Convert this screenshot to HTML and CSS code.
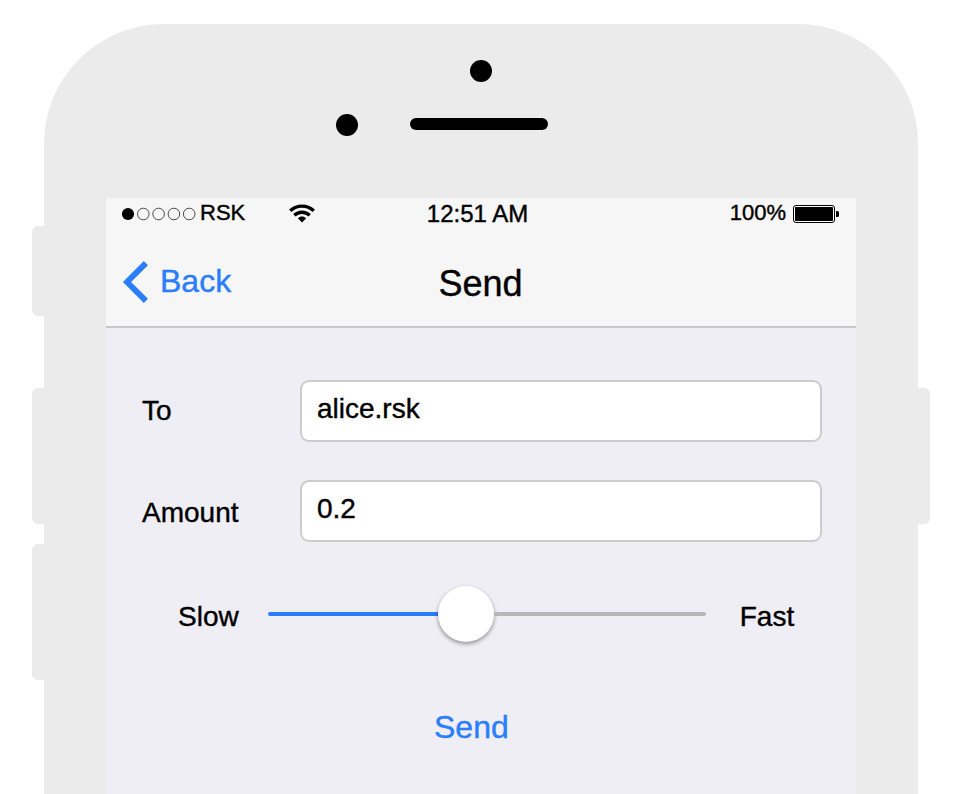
FILE: index.html
```html
<!DOCTYPE html>
<html lang="en">
<head>
<meta charset="utf-8">
<title>Send</title>
<link rel="stylesheet" href="styles.css">
</head>
<body>
<div class="phone">
  <span class="side-button mute"></span>
  <span class="side-button volume-up"></span>
  <span class="side-button volume-down"></span>
  <span class="side-button power"></span>
  <div class="bezel">
    <span class="dot camera"></span>
    <div class="earpiece">
      <span class="dot"></span>
      <span class="speaker"></span>
    </div>
  </div>
  <main class="screen">
    <header>
      <div class="status-bar">
        <div class="carrier">
          <svg class="signal" width="76" height="14" viewBox="0 0 76 14">
            <circle cx="7" cy="7" r="6.1"/>
            <g fill="none" stroke="#222" stroke-width=".8">
              <circle cx="22.3" cy="7" r="5.8"/>
              <circle cx="37.6" cy="7" r="5.8"/>
              <circle cx="52.9" cy="7" r="5.8"/>
              <circle cx="68.2" cy="7" r="5.8"/>
            </g>
          </svg>
          <span class="carrier-name">RSK</span>
          <svg class="wifi" width="26" height="19" viewBox="0 0 26 19">
            <g fill="none" stroke="#000" stroke-width="3.3">
              <path d="M1.2 6.800C8.200 .6 17.800 .6 24.800 6.800"/>
              <path d="M5.300 11.300C9.600 7.200 16.400 7.200 20.700 11.300"/>
            </g>
            <path d="M9 14.500C11 11.900 15 11.900 17 14.500L13 18.600Z"/>
          </svg>
        </div>
        <div class="clock">12:51 AM</div>
        <div class="power-status">
          <span>100%</span>
          <svg class="battery" width="47" height="18" viewBox="0 0 47 18">
            <rect x=".5" y=".5" width="41" height="17" rx="2.5" fill="#fff" stroke="#000"/>
            <rect x="2" y="2" width="38" height="14" rx=".7"/>
            <path d="M43 6h1.500q1.500 0 1.500 1.500v3q0 1.500-1.500 1.500H43Z"/>
          </svg>
        </div>
      </div>
      <nav class="nav-bar">
        <a class="back">
          <svg width="28" height="42" viewBox="0 0 28 42"><path d="M23.900 2.100L5 21L23.900 39.900" fill="none" stroke="#2a7dfb" stroke-width="5.800"/></svg>
          <span>Back</span>
        </a>
        <h1>Send</h1>
      </nav>
    </header>
    <form class="form">
      <div class="field"><label>To</label><div class="input">alice.rsk</div></div>
      <div class="field amount"><label>Amount</label><div class="input">0.2</div></div>
      <div class="speed">
        <span>Slow</span>
        <div class="slider"><span class="filled"></span><span class="knob"></span><span class="rest"></span></div>
        <span>Fast</span>
      </div>
      <div class="send">Send</div>
    </form>
  </main>
</div>
</body>
</html>
```
FILE: styles.css
```css
* { box-sizing: border-box; }
body {
  margin: 0;
  height: 794px;
  padding: 24px 46px 0 44px;
  overflow: hidden;
  background: #fff;
  color: #000;
  font-family: "Liberation Sans", Arial, sans-serif;
  -webkit-text-stroke: .4px currentColor;
}
svg { display: block; flex: none; }
.phone {
  position: relative;
  height: 770px;
  padding: 0 62px;
  background: #ebebeb;
  border-radius: 120px 120px 0 0;
}
.side-button {
  position: absolute;
  left: -12px;
  width: 12px;
  height: 136px;
  background: #ebebeb;
  border-radius: 6px 0 0 6px;
}
.mute { top: 202px; height: 90px; }
.volume-up { top: 364px; }
.volume-down { top: 520px; }
.power { top: 364px; left: auto; right: -12px; border-radius: 0 6px 6px 0; }
.bezel { height: 174px; padding-top: 36px; }
.dot { display: block; width: 22px; height: 22px; border-radius: 50%; background: #000; }
.camera { margin-left: 364px; }
.earpiece { display: flex; gap: 52px; margin: 32px 0 0 230px; }
.speaker { width: 138px; height: 12px; margin-top: 4px; border-radius: 6px; background: #000; }
.screen { height: 596px; background: #efeef4; }
header { height: 130px; background: #f6f6f6; border-bottom: 2px solid #c6c6cb; }
.status-bar {
  display: grid;
  grid-template-columns: 1fr auto 1fr;
  height: 30px;
  padding: 0 16px 0 15px;
  font-size: 22px;
  line-height: 29px;
}
.carrier { display: flex; }
.signal { margin-top: 9px; }
.carrier-name { width: 85px; padding-left: 3px; }
.wifi { margin: 6px 0 0 7px; }
.clock { margin: 0 3px 0 -3px; font-size: 24px; line-height: 31px; }
.power-status { display: flex; justify-content: flex-end; gap: 7px; }
.battery { margin-top: 7px; }
.nav-bar {
  display: grid;
  grid-template-columns: 1fr auto 1fr;
  height: 98px;
  padding: 0 17px 0 16px;
  line-height: 98px;
}
.back { display: flex; align-items: center; gap: 10px; height: 106px; color: #2a7dfb; font-size: 32px; }
.back svg { margin-top: 2px; }
.back span { height: 98px; }
h1 { margin: 0; padding-top: 7px; font-size: 36px; font-weight: 400; }
.form { padding: 52px 34px 0 36px; font-size: 28px; }
.field { display: grid; grid-template: 62px / 158px 1fr; height: 62px; margin-bottom: 38px; }
.field label { line-height: 61px; }
.field.amount label { line-height: 65px; }
.input {
  padding-left: 15px;
  background: #fff;
  border: 2px solid #ccc;
  border-radius: 9px;
  line-height: 53px;
}
.speed { display: flex; height: 68px; margin-top: 38px; padding-left: 36px; line-height: 73px; }
.slider { display: flex; align-items: center; width: 438px; margin: 0 34px 0 29px; height: 68px; }
.filled { width: 170px; height: 4px; border-radius: 2px 0 0 2px; background: #2a7dfb; }
.knob { width: 56px; height: 56px; border-radius: 50%; background: #fff; box-shadow: 0 2px 4px rgba(0, 0, 0, .4); }
.rest { flex: 1; height: 4px; border-radius: 0 2px 2px 0; background: #b7b7b7; }
.send { width: 76px; margin: 60px 0 0 292px; color: #2a7dfb; font-size: 32px; line-height: 38px; }
```
